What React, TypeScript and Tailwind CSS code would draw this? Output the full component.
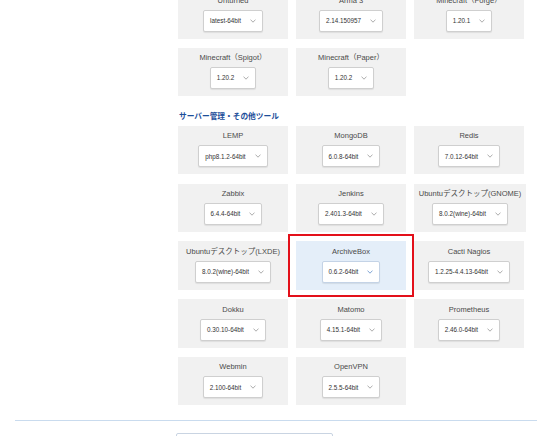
import React from "react";

type Item = {
  name: string;
  version: string;
  wide?: boolean;
  selected?: boolean;
};

const gameRows: Item[][] = [
  [
    { name: "Unturned", version: "latest-64bit" },
    { name: "Arma 3", version: "2.14.150957" },
    { name: "Minecraft（Forge）", version: "1.20.1" },
  ],
  [
    { name: "Minecraft（Spigot）", version: "1.20.2" },
    { name: "Minecraft（Paper）", version: "1.20.2" },
  ],
];

const toolRows: Item[][] = [
  [
    { name: "LEMP", version: "php8.1.2-64bit" },
    { name: "MongoDB", version: "6.0.8-64bit" },
    { name: "Redis", version: "7.0.12-64bit" },
  ],
  [
    { name: "Zabbix", version: "6.4.4-64bit" },
    { name: "Jenkins", version: "2.401.3-64bit" },
    { name: "Ubuntuデスクトップ(GNOME)", version: "8.0.2(wine)-64bit", wide: true },
  ],
  [
    { name: "Ubuntuデスクトップ(LXDE)", version: "8.0.2(wine)-64bit" },
    { name: "ArchiveBox", version: "0.6.2-64bit", selected: true },
    { name: "Cacti Nagios", version: "1.2.25-4.4.13-64bit" },
  ],
  [
    { name: "Dokku", version: "0.30.10-64bit" },
    { name: "Matomo", version: "4.15.1-64bit" },
    { name: "Prometheus", version: "2.46.0-64bit" },
  ],
  [
    { name: "Webmin", version: "2.100-64bit" },
    { name: "OpenVPN", version: "2.5.5-64bit" },
  ],
];

function Chevron({ active }: { active?: boolean }) {
  return (
    <svg width="6" height="4" viewBox="0 0 6 4" className="shrink-0">
      <path
        d="M0.5 0.6 L3 3.2 L5.5 0.6"
        fill="none"
        stroke={active ? "#4a7fc1" : "#8a8a8a"}
        strokeWidth="0.7"
      />
    </svg>
  );
}

function Card({ item }: { item: Item }) {
  return (
    <div
      className={`relative flex h-[48.5px] flex-col items-center pt-[5.5px] ${
        item.wide ? "w-[112px]" : "w-[110px]"
      } ${item.selected ? "bg-[#e4eef9]" : "bg-[#f1f1f1]"}`}
    >
      <div className="whitespace-nowrap text-[7.5px] leading-[10px] text-[#4a4a4a]">
        {item.name}
      </div>
      <div
        className={`mt-[4px] inline-flex h-[22px] items-center gap-[9px] rounded-[2px] border bg-white pl-[6px] pr-[6px] shadow-[0_1px_1px_rgba(0,0,0,0.08)] ${
          item.selected ? "border-[#c4d3e6]" : "border-[#cfcfcf]"
        }`}
      >
        <span className="whitespace-nowrap text-[6.3px] text-[#333]">{item.version}</span>
        <Chevron active={item.selected} />
      </div>
      {item.selected && (
        <div className="pointer-events-none absolute -bottom-[7px] -left-[8px] -right-[8px] -top-[7.5px] border-2 border-[#e3101a]" />
      )}
    </div>
  );
}

function Rows({ rows }: { rows: Item[][] }) {
  return (
    <div className="flex flex-col gap-[9.2px]">
      {rows.map((row, i) => (
        <div key={i} className="flex gap-[8px]">
          {row.map((item) => (
            <Card key={item.name} item={item} />
          ))}
        </div>
      ))}
    </div>
  );
}

export default function App() {
  return (
    <div
      className="h-[436px] w-[550px] overflow-hidden bg-white"
      style={{ fontFamily: '"Liberation Sans", "Noto Sans CJK JP", sans-serif' }}
    >
      {/* Game servers (scrolled) */}
      <div className="-mt-[10px] ml-[178px]">
        <Rows rows={gameRows} />

        {/* Server management & tools */}
        <h3 className="mt-[14.5px] mb-[4.3px] pl-[1px] text-[7.7px] font-bold leading-[11px] text-[#1d4e9a]">
          サーバー管理・その他ツール
        </h3>
        <Rows rows={toolRows} />
      </div>

      <div className="mx-[15px] mt-[15px] h-px w-[522px] bg-[#c9dbee]" />

      <div className="ml-[176px] mt-[12px] h-[20px] w-[157px] rounded-[2px] border border-[#c9d4e2] bg-white" />
    </div>
  );
}
